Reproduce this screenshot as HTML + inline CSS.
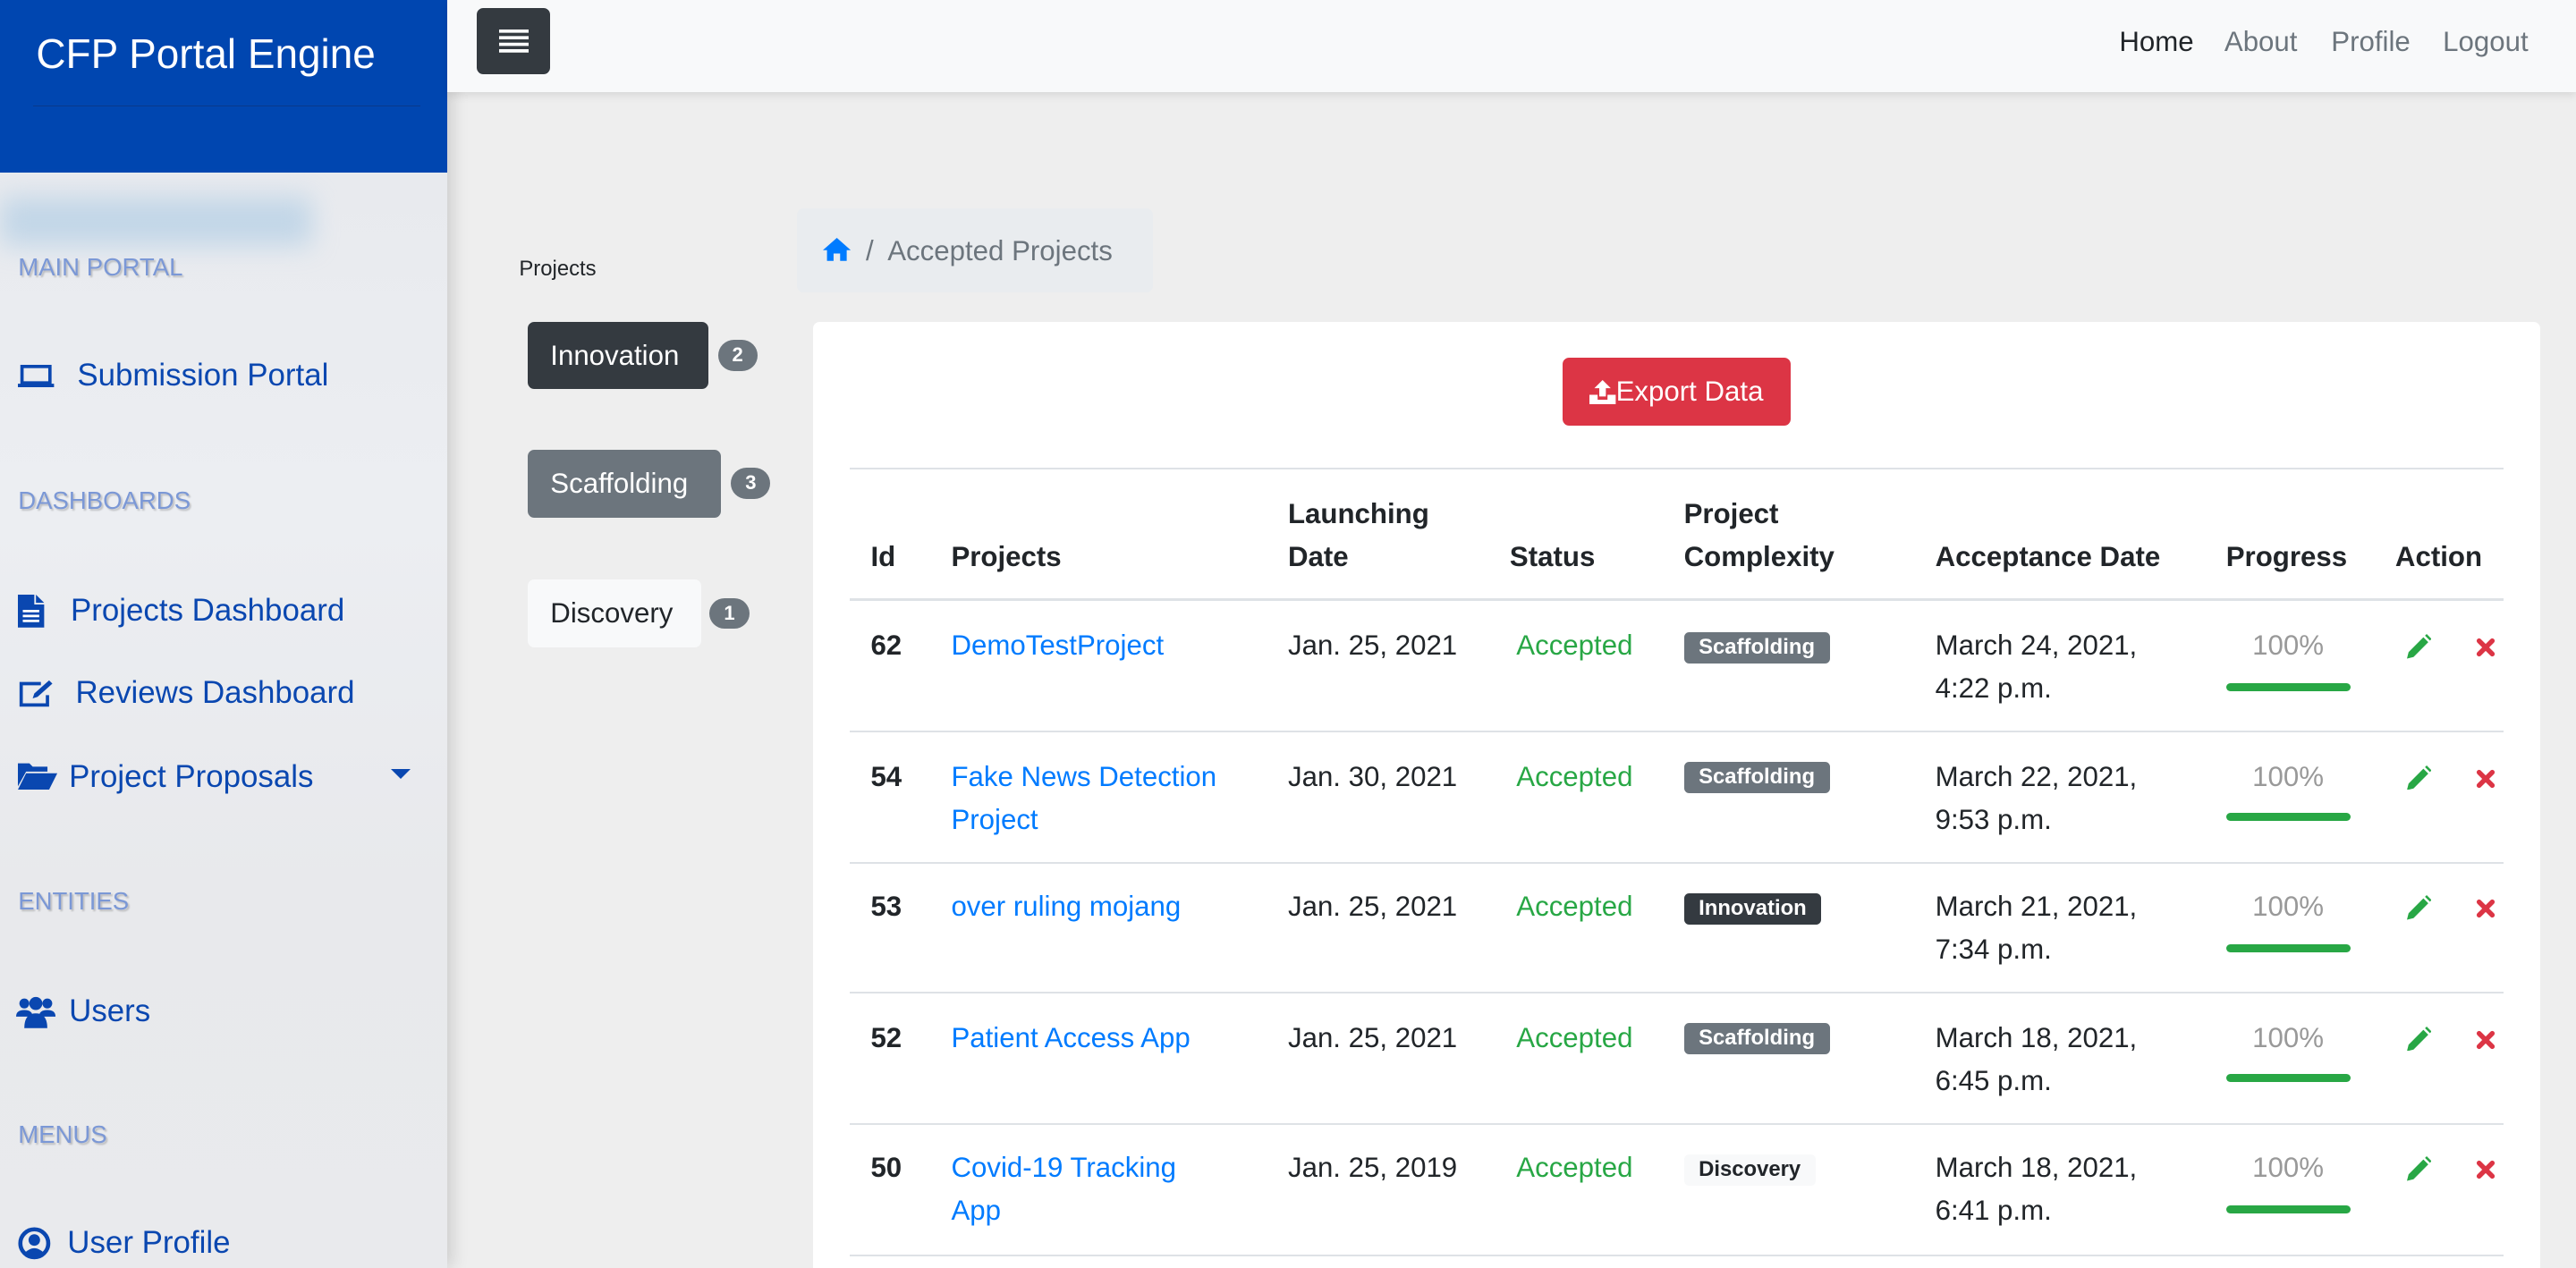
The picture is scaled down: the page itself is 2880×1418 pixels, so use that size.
<!DOCTYPE html>
<html><head><meta charset="utf-8"><style>
*{margin:0;padding:0;box-sizing:border-box}
html,body{width:2880px;height:1418px;overflow:hidden;background:#eeeeee}
#w{position:relative;width:1568px;height:772px;zoom:1.8367;font-family:"Liberation Sans",Arial,sans-serif;color:#212529;overflow:hidden;background:#eeeeee}
.a{position:absolute;white-space:nowrap}
#side{position:absolute;left:0;top:0;width:272px;height:772px;background:linear-gradient(180deg,#e6e8ec,#eceef2 40%,#e8e9ec 70%,#e9eaed);box-shadow:3px 0 10px rgba(0,0,0,.15)}
#hdr{position:absolute;left:0;top:0;width:272px;height:105px;background:#0046b0}
.sec{position:absolute;left:11px;font-size:15px;color:#7b98d6;text-shadow:1px 1px 1px rgba(0,0,0,.2)}
.it{position:absolute;font-size:19px;color:#0a47b0;white-space:nowrap}
#nav{position:absolute;left:272px;top:0;width:1296px;height:56px;background:#f8f9fa;box-shadow:0 2px 5px rgba(0,0,0,.1)}
.nl{position:absolute;top:16px;font-size:17px;color:#6c757d}
.btn{position:absolute;left:321px;height:41px;border-radius:4px;font-size:17px;padding:0 14px;line-height:41px}
.bd{position:absolute;width:24px;height:19px;border-radius:10px;background:#6c757d;color:#fff;font-size:12px;font-weight:bold;text-align:center;line-height:19px}
#card{position:absolute;left:495px;top:196px;width:1051px;height:600px;background:#fff;border-radius:4px}
th,td{position:absolute}
.h{position:absolute;font-size:17px;font-weight:bold;line-height:26px}
.c{position:absolute;font-size:17px;line-height:26px;white-space:nowrap}
.ln{position:absolute;left:517px;width:1007px;height:1px;background:#dee2e6}
.bg{position:absolute;left:1025px;height:19px;border-radius:3px;font-size:13px;font-weight:bold;line-height:19px;padding:0 9px;color:#fff}
.bar{position:absolute;left:1355px;width:76px;height:5px;border-radius:3px;background:#28a745}
</style></head><body><div id="w">
<div id="side">
<div id="hdr"><div class="a" style="left:22px;top:18px;font-size:25px;color:#fff">CFP Portal Engine</div>
<div class="a" style="left:20px;top:64px;width:236px;height:1px;background:#0a3a8a"></div></div>
<div class="a" style="left:0;top:120px;width:190px;height:30px;background:#a9c9e3;filter:blur(8px);opacity:.6"></div>
<div class="sec" style="top:154px">MAIN PORTAL</div>
<svg class="a" style="left:11px;top:222px" width="22" height="14" viewBox="0 0 22 14"><rect x="2.5" y="1" width="17" height="10" fill="none" stroke="#0a47b0" stroke-width="2"/><rect x="0" y="11.5" width="22" height="2.5" fill="#0a47b0"/></svg>
<div class="it" style="left:47px;top:218px">Submission Portal</div>
<div class="sec" style="top:296px">DASHBOARDS</div>
<svg class="a" style="left:11px;top:362px" width="16" height="20" viewBox="0 0 16 20"><path d="M0 0H10V6H16V20H0Z M11 0L16 5H11Z" fill="#0a47b0"/><path d="M3 10H13M3 13H13M3 16H13" stroke="#fff" stroke-width="1.5"/></svg>
<div class="it" style="left:43px;top:361px">Projects Dashboard</div>
<svg class="a" style="left:11px;top:413px" width="24" height="18" viewBox="0 0 24 18"><path d="M14 3H2V16H18V10" fill="none" stroke="#0a47b0" stroke-width="2"/><path d="M9 12L10 9L19 1L21 3L12 11Z" fill="#0a47b0"/></svg>
<div class="it" style="left:46px;top:411px">Reviews Dashboard</div>
<svg class="a" style="left:11px;top:463px" width="24" height="18" viewBox="0 0 24 18"><path d="M0 2H7L9 4H18V7H5L0 16Z M5 8H24L19 18H0Z" fill="#0a47b0"/></svg>
<div class="it" style="left:42px;top:462px">Project Proposals</div>
<svg class="a" style="left:238px;top:468px" width="12" height="7"><path d="M0 0H12L6 6Z" fill="#0a47b0"/></svg>
<div class="sec" style="top:540px">ENTITIES</div>
<svg class="a" style="left:10px;top:606px" width="24" height="20" viewBox="0 0 24 20"><circle cx="5" cy="5" r="3" fill="#0a47b0"/><circle cx="19" cy="5" r="3" fill="#0a47b0"/><circle cx="12" cy="5" r="4" fill="#0a47b0"/><path d="M0 13Q0 9 5 9Q10 9 10 13Z M14 13Q14 9 19 9Q24 9 24 13Z" fill="#0a47b0"/><path d="M5 20Q5 11 12 11Q19 11 19 20Z" fill="#0a47b0"/></svg>
<div class="it" style="left:42px;top:605px">Users</div>
<div class="sec" style="top:682px">MENUS</div>
<svg class="a" style="left:11px;top:747px" width="20" height="20" viewBox="0 0 20 20"><circle cx="10" cy="10" r="8.5" fill="none" stroke="#0a47b0" stroke-width="2.5"/><circle cx="10" cy="8" r="3.5" fill="#0a47b0"/><path d="M4 16Q10 10 16 16Q10 20 4 16Z" fill="#0a47b0"/></svg>
<div class="it" style="left:41px;top:746px">User Profile</div>
</div>
<div id="nav">
<div class="a" style="left:18px;top:5px;width:45px;height:40px;background:#343a40;border-radius:4px"></div>
<svg class="a" style="left:32px;top:18px" width="18" height="14"><path d="M0 1H18M0 5H18M0 9H18M0 13H18" stroke="#fff" stroke-width="2"/></svg>
<div class="nl" style="left:1018px;color:#212529">Home</div>
<div class="nl" style="left:1082px">About</div>
<div class="nl" style="left:1147px">Profile</div>
<div class="nl" style="left:1215px">Logout</div>
</div>
<div class="a" style="left:316px;top:156px;font-size:13px">Projects</div>
<div class="btn" style="top:196px;width:110px;background:#343a40;color:#fff">Innovation</div>
<div class="bd" style="left:437px;top:207px">2</div>
<div class="btn" style="top:274px;width:118px;background:#6c757d;color:#fff">Scaffolding</div>
<div class="bd" style="left:445px;top:285px">3</div>
<div class="btn" style="top:353px;width:106px;background:#f8f9fa;color:#212529">Discovery</div>
<div class="bd" style="left:432px;top:364px">1</div>
<div class="a" style="left:485px;top:127px;width:217px;height:51px;background:#e9ecef;border-radius:4px"></div>
<svg class="a" style="left:501px;top:145px" width="17" height="14" viewBox="0 0 17 14"><path d="M8.5 0L17 7.5H14.5V14H10.5V9.5H6.5V14H2.5V7.5H0Z" fill="#007bff"/></svg>
<div class="a" style="left:527px;top:143px;font-size:17px;color:#6c757d">/&nbsp; Accepted Projects</div>
<div id="card"></div>
<div class="a" style="left:951px;top:218px;width:139px;height:41px;background:#dc3545;border-radius:4px;color:#fff;font-size:17px;line-height:41px;text-align:center">&#8203;<svg width="16" height="15" viewBox="0 0 16 15" style="vertical-align:-2px"><path d="M8 0L13 5H10V10H6V5H3Z M0 9H5V12H11V9H16V15H0Z" fill="#fff"/></svg>Export Data</div>
<div class="ln" style="top:285px"></div>
<div class="h" style="left:530px;top:326px">Id</div>
<div class="h" style="left:579px;top:326px">Projects</div>
<div class="h" style="left:784px;top:300px">Launching<br>Date</div>
<div class="h" style="left:919px;top:326px">Status</div>
<div class="h" style="left:1025px;top:300px">Project<br>Complexity</div>
<div class="h" style="left:1178px;top:326px">Acceptance Date</div>
<div class="h" style="left:1355px;top:326px">Progress</div>
<div class="h" style="left:1458px;top:326px">Action</div>
<div class="ln" style="top:364px;height:2px"></div>

<!-- rows -->
<div class="c" style="left:530px;top:380px;font-weight:bold">62</div>
<div class="c" style="left:579px;top:380px;color:#007bff">DemoTestProject</div>
<div class="c" style="left:784px;top:380px">Jan. 25, 2021</div>
<div class="c" style="left:923px;top:380px;color:#28a745">Accepted</div>
<div class="bg" style="top:385px;background:#6c757d">Scaffolding</div>
<div class="c" style="left:1178px;top:380px">March 24, 2021,<br>4:22 p.m.</div>
<div class="c" style="left:1371px;top:380px;color:#999">100%</div>
<div class="bar" style="top:416px"></div>
<div class="ln" style="top:445px"></div>

<div class="c" style="left:530px;top:460px;font-weight:bold">54</div>
<div class="c" style="left:579px;top:460px;color:#007bff">Fake News Detection<br>Project</div>
<div class="c" style="left:784px;top:460px">Jan. 30, 2021</div>
<div class="c" style="left:923px;top:460px;color:#28a745">Accepted</div>
<div class="bg" style="top:464px;background:#6c757d">Scaffolding</div>
<div class="c" style="left:1178px;top:460px">March 22, 2021,<br>9:53 p.m.</div>
<div class="c" style="left:1371px;top:460px;color:#999">100%</div>
<div class="bar" style="top:495px"></div>
<div class="ln" style="top:525px"></div>

<div class="c" style="left:530px;top:539px;font-weight:bold">53</div>
<div class="c" style="left:579px;top:539px;color:#007bff">over ruling mojang</div>
<div class="c" style="left:784px;top:539px">Jan. 25, 2021</div>
<div class="c" style="left:923px;top:539px;color:#28a745">Accepted</div>
<div class="bg" style="top:544px;background:#343a40">Innovation</div>
<div class="c" style="left:1178px;top:539px">March 21, 2021,<br>7:34 p.m.</div>
<div class="c" style="left:1371px;top:539px;color:#999">100%</div>
<div class="bar" style="top:575px"></div>
<div class="ln" style="top:604px"></div>

<div class="c" style="left:530px;top:619px;font-weight:bold">52</div>
<div class="c" style="left:579px;top:619px;color:#007bff">Patient Access App</div>
<div class="c" style="left:784px;top:619px">Jan. 25, 2021</div>
<div class="c" style="left:923px;top:619px;color:#28a745">Accepted</div>
<div class="bg" style="top:623px;background:#6c757d">Scaffolding</div>
<div class="c" style="left:1178px;top:619px">March 18, 2021,<br>6:45 p.m.</div>
<div class="c" style="left:1371px;top:619px;color:#999">100%</div>
<div class="bar" style="top:654px"></div>
<div class="ln" style="top:684px"></div>

<div class="c" style="left:530px;top:698px;font-weight:bold">50</div>
<div class="c" style="left:579px;top:698px;color:#007bff">Covid-19 Tracking<br>App</div>
<div class="c" style="left:784px;top:698px">Jan. 25, 2019</div>
<div class="c" style="left:923px;top:698px;color:#28a745">Accepted</div>
<div class="bg" style="top:703px;background:#f8f9fa;color:#212529">Discovery</div>
<div class="c" style="left:1178px;top:698px">March 18, 2021,<br>6:41 p.m.</div>
<div class="c" style="left:1371px;top:698px;color:#999">100%</div>
<div class="bar" style="top:734px"></div>
<div class="ln" style="top:764px"></div>

<!-- action icons -->
<svg class="a" style="left:1465px;top:386px" width="15" height="15" viewBox="0 0 15 15"><path d="M0 15L1 11L10 2L13 5L4 14Z M11 1L12 0L15 3L14 4Z" fill="#28a745"/></svg>
<svg class="a" style="left:1507px;top:388px" width="12" height="12" viewBox="0 0 12 12"><path d="M2 2L10 10M10 2L2 10" stroke="#dc3545" stroke-width="3" stroke-linecap="round"/></svg>
<svg class="a" style="left:1465px;top:466px" width="15" height="15" viewBox="0 0 15 15"><path d="M0 15L1 11L10 2L13 5L4 14Z M11 1L12 0L15 3L14 4Z" fill="#28a745"/></svg>
<svg class="a" style="left:1507px;top:468px" width="12" height="12" viewBox="0 0 12 12"><path d="M2 2L10 10M10 2L2 10" stroke="#dc3545" stroke-width="3" stroke-linecap="round"/></svg>
<svg class="a" style="left:1465px;top:545px" width="15" height="15" viewBox="0 0 15 15"><path d="M0 15L1 11L10 2L13 5L4 14Z M11 1L12 0L15 3L14 4Z" fill="#28a745"/></svg>
<svg class="a" style="left:1507px;top:547px" width="12" height="12" viewBox="0 0 12 12"><path d="M2 2L10 10M10 2L2 10" stroke="#dc3545" stroke-width="3" stroke-linecap="round"/></svg>
<svg class="a" style="left:1465px;top:625px" width="15" height="15" viewBox="0 0 15 15"><path d="M0 15L1 11L10 2L13 5L4 14Z M11 1L12 0L15 3L14 4Z" fill="#28a745"/></svg>
<svg class="a" style="left:1507px;top:627px" width="12" height="12" viewBox="0 0 12 12"><path d="M2 2L10 10M10 2L2 10" stroke="#dc3545" stroke-width="3" stroke-linecap="round"/></svg>
<svg class="a" style="left:1465px;top:704px" width="15" height="15" viewBox="0 0 15 15"><path d="M0 15L1 11L10 2L13 5L4 14Z M11 1L12 0L15 3L14 4Z" fill="#28a745"/></svg>
<svg class="a" style="left:1507px;top:706px" width="12" height="12" viewBox="0 0 12 12"><path d="M2 2L10 10M10 2L2 10" stroke="#dc3545" stroke-width="3" stroke-linecap="round"/></svg>
</div></body></html>
